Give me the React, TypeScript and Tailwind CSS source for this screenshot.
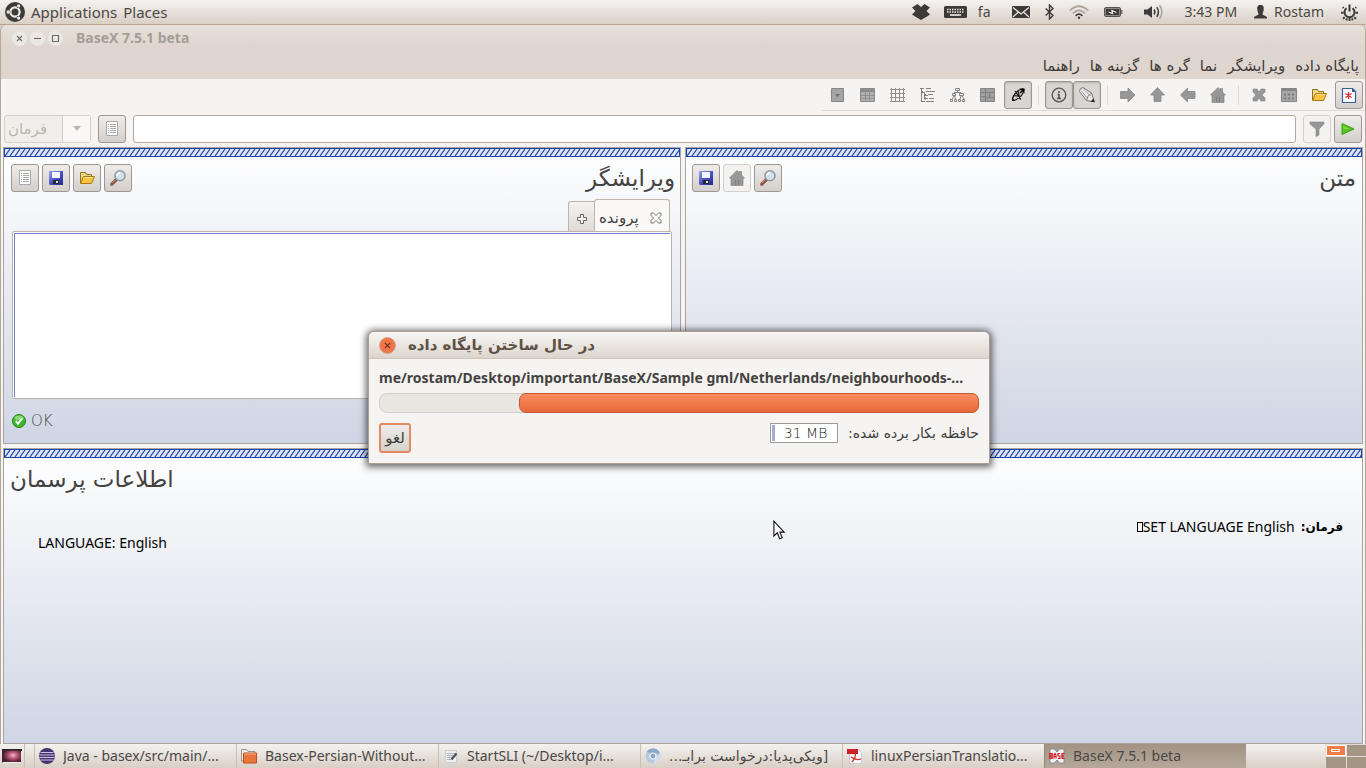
import type { ReactNode } from "react";

const ICON = "#979797";

type BtnProps = { label: string; children: ReactNode; look?: "raised" | "flat" | "pressed" | "faded" };

function IconButton({ label, children, look = "flat" }: BtnProps) {
  const looks = {
    raised: "border-[#9d9891] bg-linear-to-b from-[#eeecea] to-[#d3cfcb]",
    flat: "border-transparent",
    pressed: "border-[#9a958f] bg-[#d9d6d2] shadow-[inset_0_1px_2px_#b8b3ad]",
    faded: "border-[#d3cfca] bg-[#f3f2f0]",
  };
  return (
    <button
      type="button"
      aria-label={label}
      className={`flex h-7 w-7 shrink-0 items-center justify-center rounded-[3px] border ${looks[look]}`}
    >
      {children}
    </button>
  );
}

function Svg({ children, size = "h-4 w-4", box = "0 0 16 16" }: { children: ReactNode; size?: string; box?: string }) {
  return (
    <svg viewBox={box} className={`${size} shrink-0`} aria-hidden="true">
      {children}
    </svg>
  );
}

const ListIcon = () => (
  <Svg>
    <path d="M2.500 .5h11v14h-11z" fill="#fff" stroke="#a9a9a9" />
    <path d="M4 3.500h1M6 3.500h6M4 5.500h1M6 5.500h6M4 7.500h1M6 7.500h6M4 9.500h1M6 9.500h6M4 11.500h1M6 11.500h6" stroke="#a8a8a8" />
  </Svg>
);

const SaveIcon = () => (
  <Svg>
    <defs>
      <linearGradient id="disk" x1="0" y1="0" x2="1" y2="1">
        <stop offset="0" stopColor="#9aa2ec" />
        <stop offset=".5" stopColor="#4b52c4" />
        <stop offset="1" stopColor="#23288c" />
      </linearGradient>
    </defs>
    <path d="M1 1h14v14H2l-1-1z" fill="url(#disk)" />
    <path d="M4 2h8v6H4z" fill="#f3f6ff" />
    <path d="M5 10h6v4H5z" fill="#25272f" />
    <path d="M8 11h2v2H8z" fill="#dfe2ea" />
  </Svg>
);

const FolderIcon = () => (
  <Svg>
    <path d="M1.500 13V2.500h5l1 2h5v2" fill="#ecd689" stroke="#94721c" />
    <path d="M1.500 13.500l3-7h11l-3 7z" fill="#fbc440" stroke="#a87a16" />
    <path d="M5.500 7.500h8" stroke="#ffe69a" />
  </Svg>
);

const SearchIcon = () => (
  <Svg>
    <path d="M1.800 14.200l4.700-4.700" stroke="#8a5540" strokeWidth="3.200" strokeLinecap="round" />
    <path d="M2 13.200l3.500-3.500" stroke="#cb8f72" />
    <circle cx="10" cy="5.800" r="5" fill="#d3e1ec" stroke="#8f989f" strokeWidth="1.500" />
    <path d="M7 6a3 3 0 0 1 3-3" stroke="#fff" fill="none" strokeWidth="1.300" />
  </Svg>
);

const HomeIcon = () => (
  <Svg>
    <path d="M8 .5l2.500 2.500V1.500h2V5L15.500 8H14v7.500H2V8H.5z" fill={ICON} stroke="#858585" strokeWidth=".7" />
    <path d="M6 10h4v5H6z" fill="#7f7f7f" />
    <path d="M8 10v5" stroke="#aaa" />
  </Svg>
);

const ArrowIcon = ({ d }: { d: string }) => (
  <Svg>
    <path d={d} fill={ICON} stroke="#888" strokeWidth=".8" />
  </Svg>
);

const toolbarIcons = {
  combo: (
    <Svg>
      <path d="M1.500 1.500h12v13h-12z" fill="#a4a4a4" stroke="#868686" />
      <path d="M5 7h5L7.500 10z" fill="#6f6f6f" />
    </Svg>
  ),
  table: (
    <Svg>
      <path d="M.5 1.500h14v13H.5z" fill="#b0b0b0" stroke="#8a8a8a" />
      <path d="M1 2h13v3H1z" fill="#8c8c8c" />
      <path d="M1 8.500h13M1 11.500h13M5.500 5v9M9.500 5v9" stroke="#929292" />
    </Svg>
  ),
  grid: (
    <Svg>
      <path d="M0 2.500h15M0 6.500h15M0 10.500h15M0 14.500h15M1.500 1v14M5.500 1v14M9.500 1v14M13.500 1v14" stroke="#8f8f8f" />
    </Svg>
  ),
  tree: (
    <Svg>
      <path d="M0 1.500h4M6 1.500h5M1.500 2v13M2 5.500h3M6 4.500h9M4.500 6v6M5 8.500h3M8 7.500h5M5 11.500h3M9 11.500h5M2 14.500h3M6 14.500h8" stroke="#848484" />
      <path d="M1 4h2v2H1zM4 7h2v2H4zM4 10.500h2v2H4z" fill="#777" />
    </Svg>
  ),
  hierarchy: (
    <Svg>
      <path
        d="M5.500 1.500h4v2h-4zM2.500 6.500h3v2h-3zM9.500 6.500h4v2h-4zM.5 12.500h2v2h-2zM4.500 12.500h2v2h-2zM8.500 12.500h2v2h-2zM12.500 12.500h2v2h-2zM7.500 4v1.500M4 6.500v-1h7v1M4 9l-2 3M4.500 9l1 3M11 9l-1 3M12 9l2 3"
        fill="none"
        stroke="#848484"
      />
    </Svg>
  ),
  map: (
    <Svg>
      <path d="M.5 1.500h14v13H.5z" fill="#a0a0a0" stroke="#858585" />
      <path d="M1 5.500h13M5.500 2v12M6 10.500h8M9.500 6v4M1 9.500h4" stroke="#808080" />
    </Svg>
  ),
  plot: (
    <Svg>
      <path d="M14 2c-5 0-9 3-11.500 9.500M14 2c-.5 5-3.500 9-10 11.500M5 4l6 8.500M8 4l2 8M3 8.500l8 1" fill="none" stroke="#1a1a1a" strokeWidth="1.200" />
      <path d="M9.500 1.500h5v5l-2-2-2 2-1-1 2-2zM2 10l3 4H2z" fill="#000" />
    </Svg>
  ),
  info: (
    <Svg>
      <circle cx="8" cy="8" r="6.800" fill="none" stroke="#555" strokeWidth="1.300" />
      <path d="M8 4v2M6.500 7.500H8v4M6 11.500h4" stroke="#555" strokeWidth="1.600" fill="none" />
    </Svg>
  ),
  pencil: (
    <Svg>
      <path d="M.5 4.500Q.5 1 4 .5L12.500 6l3 9-8-1.500z" fill="#e9e9e9" stroke="#757575" />
      <path d="M2.500 4l6.500 8M4.500 2l7 7" stroke="#a2a2a2" />
      <path d="M7.500 13.500q.5-5 5-7.500" stroke="#888" fill="none" />
      <path d="M11.500 14.500l4 .5-1-3.500z" fill="#222" />
    </Svg>
  ),
};

function Grip() {
  return (
    <div className="h-[9px] shrink-0 border border-[#1f42a5] bg-[#dde6f7]">
      <svg className="block h-[7px] w-full" aria-hidden="true">
        <defs>
          <pattern id="hatch" width="5" height="7" patternUnits="userSpaceOnUse">
            <path d="M0 7L5 0M-5 7L0 0M5 7L10 0" stroke="#2146ad" strokeWidth="1.200" />
          </pattern>
        </defs>
        <rect width="100%" height="7" fill="url(#hatch)" />
      </svg>
    </div>
  );
}

function Panel({ children }: { children: ReactNode }) {
  return (
    <section className="flex min-h-0 min-w-0 flex-1 flex-col border border-[#aaa5a0] bg-linear-to-b from-white to-[#cfd5e4]">
      <Grip />
      {children}
    </section>
  );
}

const Separator = () => <div className="mx-[6px] h-5 w-px bg-[#dedbd6]" />;

const menus = ["پایگاه داده", "ویرایشگر", "نما", "گره ها", "گزینه ها", "راهنما"];

function TopBar() {
  return (
    <header className="flex h-[25px] shrink-0 items-center border-b border-[#b5a493] bg-linear-to-b from-[#f5f3f0] to-[#d9cfc5] text-[#4a4846]">
      <nav className="flex items-center gap-[6px] pl-[5px] text-[15px]">
        <Svg size="h-5 w-5" box="0 0 20 20">
          <circle cx="10" cy="10" r="10" fill="#3c3b3a" />
          <circle cx="10" cy="10" r="4.600" fill="none" stroke="#eeeae5" strokeWidth="2.200" />
          <path d="M12.300 6l2-3.600M12.300 14l2 3.600M5.400 10H1.500" stroke="#3c3b3a" strokeWidth="1.500" />
          <circle cx="13.600" cy="3.900" r="1.700" fill="#eeeae5" />
          <circle cx="13.600" cy="16.100" r="1.700" fill="#eeeae5" />
          <circle cx="3.200" cy="10" r="1.700" fill="#eeeae5" />
        </Svg>
        <a href="#applications">Applications</a>
        <a href="#places">Places</a>
      </nav>
      <div className="ml-auto flex items-center pr-2">
        <Svg size="h-[18px] w-[18px]" box="0 0 18 18">
          <path d="M5.500 1L9 4l3.500-3L18 4.500 14.500 8l3.500 3.500-3 2L9 17l-6-3.500-3-2L3.500 8 0 4.500z" fill="#3c3b3a" />
        </Svg>
        <span className="ml-[14px] flex items-center gap-[11px]">
          <Svg size="h-3 w-[23px]" box="0 0 23 12">
            <rect width="23" height="12" rx="1.500" fill="#3c3b3a" />
            <path d="M3 3.500h17M3 6h17M6 9h11" stroke="#eee9e4" strokeWidth="1.400" strokeDasharray="1.500 1" />
            <path d="M6 9h10" stroke="#eee9e4" strokeWidth="1.400" />
          </Svg>
          fa
        </span>
        <span className="ml-[21px] flex items-center gap-[15px]">
          <Svg size="h-3 w-[18px]" box="0 0 18 12">
            <rect width="18" height="12" rx="1" fill="#3c3b3a" />
            <path d="M1 1.500L9 8l8-6.500M1 11l5.500-5M17 11l-5.500-5" fill="none" stroke="#e9e4de" strokeWidth="1.300" />
          </Svg>
          <Svg size="h-4 w-[9px]" box="0 0 9 16">
            <path d="M.7 4.500l7.300 7L4.500 15V1L8 4.500l-7.300 7" fill="none" stroke="#3c3b3a" strokeWidth="1.400" />
          </Svg>
          <Svg size="h-[14px] w-5" box="0 0 20 14">
            <path d="M.8 5.500q9.200-8.500 18.400 0" fill="none" stroke="#aaa49e" strokeWidth="1.700" />
            <path d="M3.800 8.300q6.200-5.800 12.400 0" fill="none" stroke="#aaa49e" strokeWidth="1.700" />
            <path d="M6.600 10.800q3.400-3.200 6.800 0" fill="none" stroke="#3c3b3a" strokeWidth="1.600" />
            <circle cx="10" cy="12.700" r="1.200" fill="#3c3b3a" />
          </Svg>
          <Svg size="h-[10px] w-[19px]" box="0 0 19 10">
            <rect x=".5" y=".5" width="16" height="9" rx="1.500" fill="#8d8883" stroke="#55524f" />
            <path d="M2 2h13v6H2z" fill="#3c3b3a" />
            <path d="M17 3h1.500v4H17z" fill="#77726d" />
            <path d="M4.500 5l4 1.500-.5-3L12.500 5.500" fill="none" stroke="#f1eeea" strokeWidth="1.300" />
          </Svg>
        </span>
        <span className="ml-[21px] flex items-center gap-[21px]">
          <Svg size="h-4 w-5" box="0 0 20 16">
            <path d="M0 5.500h3.500L8 2v12l-4.500-3.500H0z" fill="#3c3b3a" />
            <path d="M10 5.500q1.800 2.500 0 5M12.800 3.200q3.200 4.800 0 9.600" fill="none" stroke="#3c3b3a" strokeWidth="1.500" />
            <path d="M15.500 1q4.800 7 0 14" fill="none" stroke="#aaa49e" strokeWidth="1.500" />
          </Svg>
          <time>3:43 PM</time>
        </span>
        <span className="ml-[17px] flex items-center gap-[7px]">
          <Svg size="h-[14px] w-[13px]" box="0 0 13 14">
            <path d="M6.500 0C9.500 0 10 2 9.700 4.500 9.400 7 8.500 8 8.500 9.500L13 12v1.500H0V12l4.500-2.500C4.500 8 3.600 7 3.300 4.500 3 2 3.500 0 6.500 0z" fill="#3c3b3a" />
          </Svg>
          Rostam
        </span>
        <button type="button" aria-label="Power" className="ml-[17px]">
          <Svg size="h-[17px] w-[17px]" box="0 0 17 17">
            <path d="M5.500 4.200a5 5 0 1 0 6 0M8.500.5v7" fill="none" stroke="#3c3b3a" strokeWidth="2" />
            <path d="M2.600 4.200L1.700 3.200M14.400 4.200l.9-1M0 8.800h2.500M14.500 8.800H17M2 14.800l1.700-1.600M15 14.800l-1.700-1.600M8.500 14v3M5.300 16.400l.7-2M11.700 16.400l-.7-2" stroke="#3c3b3a" strokeWidth="1.900" />
          </Svg>
        </button>
      </div>
    </header>
  );
}

function WindowHeader() {
  return (
    <div className="shrink-0 rounded-t-md bg-linear-to-b from-[#e5e1da] via-[#ded5ce] via-40% to-[#dfd6cf]">
      <div className="flex h-[26px] items-center">
        <div className="ml-[11px] flex items-center gap-[3px]">
          {[
            ["Close", "M5 5l5 5M10 5l-5 5"],
            ["Minimize", "M4 7.500h7"],
            ["Maximize", "M4.500 4.500h6v6h-6z"],
          ].map(([label, d]) => (
            <button key={label} type="button" aria-label={label} className="rounded-full bg-[#ebe7e3]">
              <Svg size="h-[15px] w-[15px]" box="0 0 15 15">
                <path d={d} fill="none" stroke="#6e6862" strokeWidth="1.100" />
              </Svg>
            </button>
          ))}
        </div>
        <h1 className="ml-[13px] font-bold text-[#a59e97]">BaseX 7.5.1 beta</h1>
      </div>
      <nav dir="rtl" className="flex h-7 items-center gap-[10px] px-[6px] pt-px font-['DejaVu_Sans',sans-serif] text-[15px] text-[#3f3d3b]">
        {menus.map((m) => (
          <a key={m} href="#menu">
            {m}
          </a>
        ))}
      </nav>
    </div>
  );
}

function Toolbar() {
  return (
    <div className="flex h-8 shrink-0 justify-end bg-[#f5f4f2]">
      <div className="flex items-center border-b border-[#dfdcd6] pr-[2px] pl-[2px]">
        <div className="flex gap-[2px]">
          <IconButton label="Buttons">{toolbarIcons.combo}</IconButton>
          <IconButton label="Table">{toolbarIcons.table}</IconButton>
          <IconButton label="Grid">{toolbarIcons.grid}</IconButton>
          <IconButton label="Folder view">{toolbarIcons.tree}</IconButton>
          <IconButton label="Tree">{toolbarIcons.hierarchy}</IconButton>
          <IconButton label="Map">{toolbarIcons.map}</IconButton>
          <IconButton label="Plot" look="pressed">{toolbarIcons.plot}</IconButton>
        </div>
        <Separator />
        <div className="flex">
          <IconButton label="Info" look="pressed">{toolbarIcons.info}</IconButton>
          <IconButton label="Editor" look="pressed">{toolbarIcons.pencil}</IconButton>
        </div>
        <Separator />
        <div className="flex gap-[2px]">
          <IconButton label="Forward"><ArrowIcon d="M.5 4.500H8V1l7 7-7 7v-3.500H.5z" /></IconButton>
          <IconButton label="Up"><ArrowIcon d="M7.500 .5L14.500 8H11v6.500H4V8H.5z" /></IconButton>
          <IconButton label="Back"><ArrowIcon d="M15 4.500H7.500V1L.5 8l7 7v-3.500H15z" /></IconButton>
          <IconButton label="Home"><HomeIcon /></IconButton>
        </div>
        <Separator />
        <div className="flex gap-[2px]">
          <IconButton label="Close database">
            <Svg><path d="M2 2h4l2 3 2-3h4v3l-3 3 3 3v3h-4l-2-3-2 3H2v-3l3-3-3-3z" fill={ICON} stroke="#858585" strokeWidth=".6" /></Svg>
          </IconButton>
          <IconButton label="Properties">
            <Svg>
              <path d="M.5 1.500h15v13H.5z" fill="#a6a6a6" stroke="#858585" />
              <path d="M1 3h14" stroke="#868686" strokeWidth="2" />
              <path d="M3 7.500h10M3 11.500h10" stroke="#7c7c7c" strokeWidth="2" strokeDasharray="2 2" />
            </Svg>
          </IconButton>
          <IconButton label="Open database"><FolderIcon /></IconButton>
          <IconButton label="New database" look="raised">
            <Svg>
              <path d="M1.500 1.500h10l3 3v11h-13z" fill="#fafcff" stroke="#3b5f97" strokeWidth="1.200" />
              <path d="M11 1v4h4z" fill="#3b5f97" />
              <path d="M7.500 5v7M4.500 6.500l6 4M10.500 6.500l-6 4" stroke="#e03030" strokeWidth="1.300" />
            </Svg>
          </IconButton>
        </div>
      </div>
    </div>
  );
}

function CommandRow() {
  return (
    <div className="flex h-9 shrink-0 items-center bg-[#f5f4f2] pr-[3px] pb-px pl-[3px]">
      <label className="relative mr-[7px] flex h-7 w-[87px] text-[#bdb5ab]">
        <select
          aria-label="Input mode"
          disabled
          className="h-7 w-full appearance-none rounded-[3px] border border-[#d5cec6] bg-[#f0eeeb] pl-[3px] font-['DejaVu_Sans',sans-serif] text-[15px]"
        >
          <option>فرمان</option>
        </select>
        <span className="pointer-events-none absolute inset-y-px right-px flex w-7 items-center justify-center border-l border-[#d5cec6] bg-[#f9f8f7]">
          <Svg size="h-[5px] w-2" box="0 0 8 5"><path d="M0 0h8L4 5z" fill="#bdb5ab" /></Svg>
        </span>
      </label>
      <IconButton label="History" look="raised"><ListIcon /></IconButton>
      <input aria-label="Command" className="mx-[7px] h-7 min-w-0 flex-1 rounded-[3px] border border-[#b4a99d] bg-white px-2" />
      <IconButton label="Filter" look="faded">
        <Svg><path d="M1 1h14v2l-5 5v6l-3 1.500V8L1 3z" fill={ICON} stroke="#858585" strokeWidth=".6" /></Svg>
      </IconButton>
      <span className="w-[3px]" />
      <IconButton label="Run" look="raised">
        <Svg><path d="M2 2.500L14 8 2 13.500z" fill="#55c01f" stroke="#38a312" /><path d="M3.500 5l6 3h-6z" fill="#86d84f" /></Svg>
      </IconButton>
    </div>
  );
}

function EditorPanel() {
  return (
    <Panel>
      <div className="flex min-h-0 flex-1 flex-col px-2">
        <div className="flex justify-between pt-[7px]">
          <div className="-ml-px flex gap-[3px]">
            <IconButton label="Recent" look="raised"><ListIcon /></IconButton>
            <IconButton label="Save" look="raised"><SaveIcon /></IconButton>
            <IconButton label="Open" look="raised"><FolderIcon /></IconButton>
            <IconButton label="Find" look="raised"><SearchIcon /></IconButton>
          </div>
          <h2 dir="rtl" className="-mr-[3px] font-['DejaVu_Sans',sans-serif] text-[23px] leading-7 text-[#434343]">ویرایشگر</h2>
        </div>
        <div className="mt-[7px] flex items-end justify-end pr-[2px]">
          <button type="button" aria-label="New tab" className="flex h-[30px] w-[26px] items-center justify-center rounded-tl-[3px] border border-r-0 border-b-0 border-[#beb4ab] bg-linear-to-b from-[#f4f2f0] to-[#dfdad5] pt-1">
            <Svg size="h-3 w-3" box="0 0 12 12"><path d="M4.500 1.500h3v3h3v3h-3v3h-3v-3h-3v-3h3z" fill="#f5f4f2" stroke="#666" /></Svg>
          </button>
          <div className="flex h-8 w-[76px] items-center justify-between rounded-t-[3px] border border-b-0 border-[#beb4ab] bg-[#faf9f8] pt-1 pr-[7px] pl-1">
            <span dir="rtl" className="font-['DejaVu_Sans',sans-serif] text-[15px] text-[#3f3d3b]">پرونده</span>
            <button type="button" aria-label="Close tab">
              <Svg size="h-3 w-3" box="0 0 12 12"><path d="M1 1h2.500L6 3.500 8.500 1H11v2.500L8.500 6 11 8.500V11H8.500L6 8.500 3.500 11H1V8.500L3.500 6 1 3.500z" fill="#faf9f8" stroke="#666" strokeWidth=".9" /></Svg>
            </button>
          </div>
        </div>
        <div className="flex min-h-0 flex-1 rounded-[2px] border border-[#beb4ab] bg-white p-px">
          <textarea aria-label="Editor" className="w-full resize-none border-t border-l border-[#6f86cf] bg-white outline-none" />
        </div>
        <p className="flex h-11 items-center gap-[5px] font-['DejaVu_Sans',sans-serif] text-[15px] font-extralight text-[#3f3f3f]">
          <Svg size="h-[14px] w-[14px]" box="0 0 14 14">
            <circle cx="7" cy="7" r="6.500" fill="#3fb52a" stroke="#23831a" />
            <ellipse cx="7" cy="4" rx="4.500" ry="2.500" fill="#86dc72" />
            <path d="M3.800 7.200l2.200 2.600 4-5.300" fill="none" stroke="#fff" strokeWidth="1.900" />
          </Svg>
          OK
        </p>
      </div>
    </Panel>
  );
}

function TextPanel() {
  return (
    <Panel>
      <div className="flex justify-between px-[6px] pt-[7px]">
        <div className="flex gap-[3px]">
          <IconButton label="Save text" look="raised"><SaveIcon /></IconButton>
          <IconButton label="Home text" look="faded"><HomeIcon /></IconButton>
          <IconButton label="Find text" look="raised"><SearchIcon /></IconButton>
        </div>
        <h2 dir="rtl" className="font-['DejaVu_Sans',sans-serif] text-[23px] leading-7 text-[#434343]">متن</h2>
      </div>
    </Panel>
  );
}

function InfoPanel() {
  return (
    <Panel>
      <h2 dir="rtl" className="px-[6px] pt-[7px] text-left font-['DejaVu_Sans',sans-serif] text-[23px] leading-7 text-[#434343]">اطلاعات پرسمان</h2>
      <div className="mt-[26px] px-[19px] text-[14px] leading-4 text-black">
        <p dir="rtl" className="flex h-4 items-center">
          <b className="ml-[6px] font-['DejaVu_Sans',sans-serif] text-[12px]">فرمان:</b>
          <span dir="ltr">SET LANGUAGE English</span>
          <span className="h-[10px] w-[6px] border border-black" />
        </p>
        <p className="pl-[15px]">LANGUAGE: English</p>
      </div>
    </Panel>
  );
}

function ProgressDialog() {
  return (
    <div
      role="dialog"
      aria-labelledby="dialog-title"
      className="absolute top-[331px] left-[368px] w-[622px] rounded-t-md border border-[#a99e93] bg-[#f5f4f2] shadow-[0_1px_7px_2px_rgba(0,0,0,0.6)]"
    >
      <div className="flex h-[27px] items-center gap-3 rounded-t-md border-b border-[#cfc4b9] bg-linear-to-b from-[#f8f7f5] to-[#dcd5cc] pl-[10px]">
        <button type="button" aria-label="Close dialog">
          <Svg size="h-[17px] w-[17px]" box="0 0 17 17">
            <circle cx="8.500" cy="8.500" r="7.800" fill="#f0764a" stroke="#d9896b" />
            <path d="M5.800 5.800l5.400 5.400M11.200 5.800l-5.400 5.400" stroke="#6d321c" strokeWidth="1.200" />
          </Svg>
        </button>
        <h2 id="dialog-title" dir="rtl" className="font-['DejaVu_Sans',sans-serif] text-[15px] font-bold text-[#5e5248]">در حال ساختن پایگاه داده</h2>
      </div>
      <div className="px-[10px] pt-[9px] pb-[10px]">
        <p className="overflow-hidden font-bold leading-5 whitespace-nowrap text-[#454341]">me/rostam/Desktop/important/BaseX/Sample gml/Netherlands/neighbourhoods-...</p>
        <div role="progressbar" aria-label="Progress" aria-valuenow={77} className="mt-[5px] flex h-5 justify-end rounded-[8px] border border-[#d3cec8] bg-[#e9e6e2]">
          <div className="-m-px w-[77%] rounded-[7px] border border-[#c25a34] bg-linear-to-b from-[#f98d5f] to-[#e8683a]" />
        </div>
        <div className="mt-[10px] flex items-start justify-between text-[#403e3c]">
          <button type="button" className="h-[30px] w-8 rounded-[3px] border-2 border-[#e58963] bg-linear-to-b from-[#efedeb] to-[#d6d2cd] font-['DejaVu_Sans',sans-serif] text-[15px]">لغو</button>
          <div className="flex items-center gap-[10px]">
            <span className="flex h-5 w-[68px] items-center border border-[#9b9b9b] bg-white p-px">
              <span className="h-4 w-[3px] bg-[#a3acd8]" />
              <span className="flex-1 text-center font-['DejaVu_Sans',sans-serif] text-[14px] font-extralight text-[#222]">31 MB</span>
            </span>
            <span dir="rtl" className="font-['DejaVu_Sans',sans-serif] text-[14px]">حافظه بکار برده شده:</span>
          </div>
        </div>
      </div>
    </div>
  );
}

const tasks: { title: string; icon: ReactNode; rtl?: boolean; active?: boolean }[] = [
  {
    title: "Java - basex/src/main/...",
    icon: (
      <Svg>
        <circle cx="8" cy="8" r="8" fill="#45326e" />
        <path d="M1.500 4.500h13M.4 7h15.200M.4 9.500h15.200M1.500 12h13" stroke="#c9c2e2" strokeWidth="1" />
      </Svg>
    ),
  },
  {
    title: "Basex-Persian-Without...",
    icon: (
      <Svg>
        <path d="M.5 13V1.500h5l1.500 2h7V13z" fill="#f1efec" stroke="#98938d" />
        <path d="M2.500 5h13v10h-13z" fill="#e8753c" stroke="#bb4d1c" />
        <path d="M3 6h12" stroke="#f7b08b" />
      </Svg>
    ),
  },
  {
    title: "StartSLI (~/Desktop/i...",
    icon: (
      <Svg>
        <path d="M2.500 2.500h11v12h-11z" fill="#edf0f2" stroke="#c6ccd0" />
        <path d="M4 5.500h8M4 7.500h7M4 9.500h5M4 11.500h4" stroke="#adb4b9" />
        <path d="M13.500 5.500l-5 6" stroke="#4b4a49" strokeWidth="2" />
      </Svg>
    ),
  },
  {
    title: "[ویکی‌پدیا:درخواست برابـ...",
    rtl: true,
    icon: (
      <Svg>
        <circle cx="8" cy="8" r="7.500" fill="#b9c9dd" />
        <path d="M1.500 4A7.500 7.500 0 0 1 15 5.500H8z" fill="#8ba8cb" />
        <path d="M8 15.500l3.500-6 3.500-4a7.500 7.500 0 0 1-7 10z" fill="#d6dfe9" />
        <circle cx="8" cy="8" r="3" fill="#86a6cd" stroke="#f1f4f8" strokeWidth="1.200" />
      </Svg>
    ),
  },
  {
    title: "linuxPersianTranslatio...",
    icon: (
      <Svg>
        <path d="M2.500 1.500h9l3 3v11h-12z" fill="#fafafa" stroke="#ccc" />
        <path d="M0 1h11v5H0z" fill="#cf1f25" />
        <path d="M5 14c3-3 4-7 3-8M4 9c4 3 7 3 10 2" fill="none" stroke="#d3302c" strokeWidth="1.300" />
      </Svg>
    ),
  },
  {
    title: "BaseX 7.5.1 beta",
    active: true,
    icon: (
      <Svg>
        <path d="M1 1h4.500L8 4l2.500-3H15v4l-2.500 3 2.500 3v4h-4.500L8 12l-2.500 3H1v-4l2.500-3L1 5z" fill="#f3f3f3" stroke="#8b8b8b" />
        <path d="M.7 5.500v5h2.500v-5zM1 8h2M5 10.500V7l1-1.500 1 1.500v3.500M5 8.500h2M11 5.500H9V8h2v2.500H9M15.500 5.500H13v5h2.500M13 8h2" fill="none" stroke="#d8141c" strokeWidth="1.100" />
      </Svg>
    ),
  },
];

function TaskBar() {
  return (
    <footer className="flex h-6 shrink-0 items-center bg-linear-to-b from-[#f4f2ef] to-[#d9cfc6] text-[#4a4846]">
      <button type="button" aria-label="Show desktop" className="ml-[2px]">
        <Svg size="h-[14px] w-5" box="0 0 20 14">
          <defs>
            <radialGradient id="wall" cx=".55" cy=".45"><stop offset="0" stopColor="#f4b3c4" /><stop offset=".5" stopColor="#b15170" /><stop offset="1" stopColor="#4a1f30" /></radialGradient>
          </defs>
          <rect width="20" height="14" fill="url(#wall)" /><path d="M0 0h20v1.500H0z" fill="#252525" />
          <path d="M.5 13.500h19V2" fill="none" stroke="#eee" />
        </Svg>
      </button>
      <span className="mr-[9px] ml-[2px] h-6 w-px bg-[#c9bfb5]" />
      <nav className="flex h-full min-w-0 flex-1">
        {tasks.map((t) => (
          <button
            key={t.title}
            type="button"
            className={`flex h-full w-[202px] min-w-0 items-center gap-2 border-l pl-1 text-left ${t.active ? "border-[#93877a] bg-linear-to-b from-[#a29384] to-[#b5a89a]" : "border-[#c9bfb5]"}`}
          >
            {t.icon}
            <span dir={t.rtl ? "rtl" : "ltr"} className={t.rtl ? "truncate font-['DejaVu_Sans',sans-serif] text-[14px]" : "truncate"}>
              {t.title}
            </span>
          </button>
        ))}
      </nav>
      <div className="grid h-6 w-[41px] grid-cols-2 grid-rows-2 gap-px border-t border-l border-[#e5ded6] bg-[#e5ded6]">
        <span className="flex items-center justify-center border border-white bg-[#f17b49]"><i className="h-[3px] w-[9px] border border-white" /></span>
        <span className="bg-[#a49685]" />
        <span className="bg-[#a49685]" />
        <span className="bg-[#a49685]" />
      </div>
    </footer>
  );
}

export default function App() {
  return (
    <div className="relative flex h-screen flex-col overflow-hidden bg-[#d9cfc5] font-['Noto_Sans','DejaVu_Sans',sans-serif] text-[14px] leading-5">
      <TopBar />
      <main className="flex min-h-0 flex-1 flex-col rounded-t-md border-x border-[#b5a698]">
        <WindowHeader />
        <Toolbar />
        <CommandRow />
        <div className="flex min-h-0 flex-1 flex-col gap-1 bg-[#f5f4f2] pr-[2px] pl-[2px]">
          <div className="flex min-h-0 flex-1 gap-1">
            <EditorPanel />
            <TextPanel />
          </div>
          <div className="flex min-h-0 flex-1">
            <InfoPanel />
          </div>
        </div>
      </main>
      <TaskBar />
      <ProgressDialog />
      <svg viewBox="0 0 13 21" className="pointer-events-none absolute top-[520px] left-[773px] h-5 w-3" aria-hidden="true">
        <path d="M1 1v16l3.700-3.500L7.200 20l2.800-1.200-2.600-6H12z" fill="#fff" stroke="#111" strokeWidth="1.200" />
      </svg>
    </div>
  );
}
